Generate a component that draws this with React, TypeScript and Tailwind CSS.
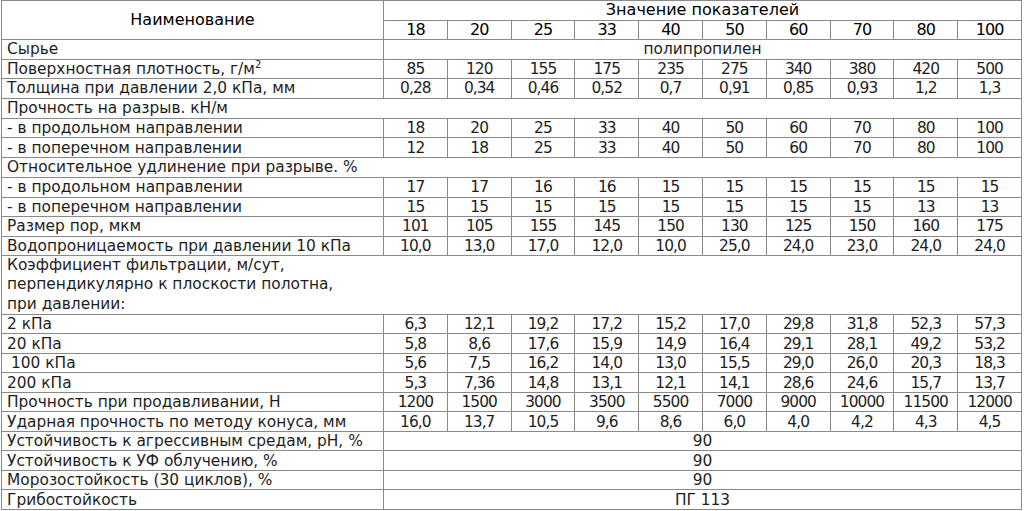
import React from "react";

type Row =
  | { kind: "values"; name: React.ReactNode; values: string[]; indent?: boolean }
  | { kind: "merged"; name: React.ReactNode; value: string }
  | { kind: "section"; name: React.ReactNode; lines?: number };

const rows: Row[] = [
  { kind: "merged", name: "Сырье", value: "полипропилен" },
  {
    kind: "values",
    name: (
      <>
        Поверхностная плотность, г/м<sup className="text-[10px] relative -top-[6px]">2</sup>
      </>
    ),
    values: ["85", "120", "155", "175", "235", "275", "340", "380", "420", "500"],
  },
  {
    kind: "values",
    name: "Толщина при давлении 2,0 кПа, мм",
    values: ["0,28", "0,34", "0,46", "0,52", "0,7", "0,91", "0,85", "0,93", "1,2", "1,3"],
  },
  { kind: "section", name: "Прочность на разрыв. кН/м" },
  {
    kind: "values",
    name: "- в продольном направлении",
    values: ["18", "20", "25", "33", "40", "50", "60", "70", "80", "100"],
  },
  {
    kind: "values",
    name: "- в поперечном направлении",
    values: ["12", "18", "25", "33", "40", "50", "60", "70", "80", "100"],
  },
  { kind: "section", name: "Относительное удлинение при разрыве. %" },
  {
    kind: "values",
    name: "- в продольном направлении",
    values: ["17", "17", "16", "16", "15", "15", "15", "15", "15", "15"],
  },
  {
    kind: "values",
    name: "- в поперечном направлении",
    values: ["15", "15", "15", "15", "15", "15", "15", "15", "13", "13"],
  },
  {
    kind: "values",
    name: "Размер пор, мкм",
    values: ["101", "105", "155", "145", "150", "130", "125", "150", "160", "175"],
  },
  {
    kind: "values",
    name: "Водопроницаемость при давлении 10 кПа",
    values: ["10,0", "13,0", "17,0", "12,0", "10,0", "25,0", "24,0", "23,0", "24,0", "24,0"],
  },
  {
    kind: "section",
    lines: 3,
    name: (
      <>
        Коэффициент фильтрации, м/сут,
        <br />
        перпендикулярно к плоскости полотна,
        <br />
        при давлении:
      </>
    ),
  },
  {
    kind: "values",
    name: "2 кПа",
    values: ["6,3", "12,1", "19,2", "17,2", "15,2", "17,0", "29,8", "31,8", "52,3", "57,3"],
  },
  {
    kind: "values",
    name: "20 кПа",
    values: ["5,8", "8,6", "17,6", "15,9", "14,9", "16,4", "29,1", "28,1", "49,2", "53,2"],
  },
  {
    kind: "values",
    name: "100 кПа",
    indent: true,
    values: ["5,6", "7,5", "16,2", "14,0", "13,0", "15,5", "29,0", "26,0", "20,3", "18,3"],
  },
  {
    kind: "values",
    name: "200 кПа",
    values: ["5,3", "7,36", "14,8", "13,1", "12,1", "14,1", "28,6", "24,6", "15,7", "13,7"],
  },
  {
    kind: "values",
    name: "Прочность при продавливании, Н",
    values: ["1200", "1500", "3000", "3500", "5500", "7000", "9000", "10000", "11500", "12000"],
  },
  {
    kind: "values",
    name: "Ударная прочность по методу конуса, мм",
    values: ["16,0", "13,7", "10,5", "9,6", "8,6", "6,0", "4,0", "4,2", "4,3", "4,5"],
  },
  { kind: "merged", name: "Устойчивость к агрессивным средам, рН, %", value: "90" },
  { kind: "merged", name: "Устойчивость к УФ облучению, %", value: "90" },
  { kind: "merged", name: "Морозостойкость (30 циклов), %", value: "90" },
  { kind: "merged", name: "Грибостойкость", value: "ПГ 113" },
];

const grades = ["18", "20", "25", "33", "40", "50", "60", "70", "80", "100"];

const cell = "border border-[#8a8a8a] p-0";
const nameCell = `${cell} pl-[5px] text-left whitespace-nowrap`;
const numCell = `${cell} text-center tracking-[-0.06em]`;

export default function App() {
  return (
    <div className="bg-white w-[1024px] h-[511px] overflow-hidden pl-[1px]">
      <table
        className="table-fixed border-collapse w-[1021px] text-[#1e1e1e] text-[15.4px] leading-[16px]"
        style={{ fontFamily: '"DejaVu Sans", "Noto Sans", sans-serif' }}
      >
        <colgroup>
          <col className="w-[382px]" />
          {grades.map((g) => (
            <col key={g} />
          ))}
        </colgroup>
        <thead>
          <tr className="h-[19.5px]">
            <th rowSpan={2} className={`${cell} font-normal text-[16px] text-black text-center`}>
              Наименование
            </th>
            <th colSpan={10} className={`${cell} font-normal text-[16px] text-black text-center`}>
              Значение показателей
            </th>
          </tr>
          <tr className="h-[19.5px]">
            {grades.map((g) => (
              <th key={g} className={`${numCell} font-normal text-[16px] text-black`}>
                {g}
              </th>
            ))}
          </tr>
        </thead>
        <tbody>
          {rows.map((r, i) => {
            if (r.kind === "section") {
              return (
                <tr key={i} style={{ height: `${19.5 * (r.lines ?? 1)}px` }}>
                  <td colSpan={11} className={`${nameCell} leading-[19.3px]`}>
                    {r.name}
                  </td>
                </tr>
              );
            }
            if (r.kind === "merged") {
              return (
                <tr key={i} className="h-[19.5px]">
                  <td className={nameCell}>{r.name}</td>
                  <td colSpan={10} className={`${cell} text-center`}>
                    {r.value}
                  </td>
                </tr>
              );
            }
            return (
              <tr key={i} className="h-[19.5px]">
                <td className={`${nameCell} ${r.indent ? "pl-[9px]" : ""}`}>{r.name}</td>
                {r.values.map((v, j) => (
                  <td key={j} className={numCell}>
                    {v}
                  </td>
                ))}
              </tr>
            );
          })}
        </tbody>
      </table>
    </div>
  );
}
